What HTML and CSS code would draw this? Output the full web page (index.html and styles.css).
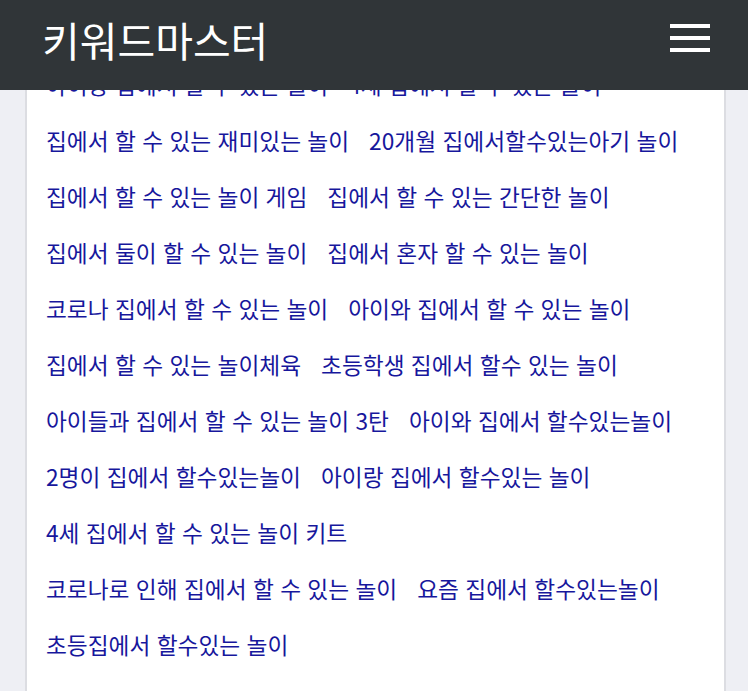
FILE: index.html
```html
<!DOCTYPE html>
<html lang="ko">
<head>
<meta charset="utf-8">
<title>키워드마스터</title>
<link rel="stylesheet" href="styles.css">
</head>
<body>
<header class="topbar">
  <div class="brand">키워드마스터</div>
  <button class="menu" aria-label="menu">
    <span class="bar"></span><span class="bar"></span><span class="bar"></span>
  </button>
</header>
<main class="panel">
  <div class="keywords">
    <a class="kw" href="#">아이랑 집에서 할 수 있는 놀이</a>
    <a class="kw" href="#">4세 집에서 할 수 있는 놀이</a>
    <a class="kw" href="#">집에서 할 수 있는 재미있는 놀이</a>
    <a class="kw" href="#">20개월 집에서할수있는아기 놀이</a>
    <a class="kw" href="#">집에서 할 수 있는 놀이 게임</a>
    <a class="kw" href="#">집에서 할 수 있는 간단한 놀이</a>
    <a class="kw" href="#">집에서 둘이 할 수 있는 놀이</a>
    <a class="kw" href="#">집에서 혼자 할 수 있는 놀이</a>
    <a class="kw" href="#">코로나 집에서 할 수 있는 놀이</a>
    <a class="kw" href="#">아이와 집에서 할 수 있는 놀이</a>
    <a class="kw" href="#">집에서 할 수 있는 놀이체육</a>
    <a class="kw" href="#">초등학생 집에서 할수 있는 놀이</a>
    <a class="kw" href="#">아이들과 집에서 할 수 있는 놀이 3탄</a>
    <a class="kw" href="#">아이와 집에서 할수있는놀이</a>
    <a class="kw" href="#">2명이 집에서 할수있는놀이</a>
    <a class="kw" href="#">아이랑 집에서 할수있는 놀이</a>
    <a class="kw" href="#">4세 집에서 할 수 있는 놀이 키트</a>
    <a class="kw" href="#">코로나로 인해 집에서 할 수 있는 놀이</a>
    <a class="kw" href="#">요즘 집에서 할수있는놀이</a>
    <a class="kw" href="#">초등집에서 할수있는 놀이</a>
  </div>
</main>
</body>
</html>
```

FILE: styles.css
```css
html, body {
  margin: 0;
  padding: 0;
}
body {
  background: #eeeff4;
  font-family: "Noto Sans CJK KR", "Noto Sans", sans-serif;
}
.topbar {
  position: fixed;
  top: 0;
  left: 0;
  right: 0;
  height: 90px;
  background: #303538;
  display: flex;
  align-items: center;
  justify-content: space-between;
  padding: 0 38px 0 42px;
  box-sizing: border-box;
  z-index: 10;
}
.brand {
  color: #ffffff;
  font-size: 41px;
  line-height: 1;
  margin-top: -12px;
}
.menu {
  background: none;
  border: 0;
  padding: 0;
  display: flex;
  flex-direction: column;
  gap: 8px;
  margin-top: -14px;
}
.bar {
  display: block;
  width: 40px;
  height: 4px;
  background: #ffffff;
}
.panel {
  margin: 0 22px 0 25px;
  background: #ffffff;
  border-left: 2px solid #dcdde2;
  border-right: 2px solid #dcdde2;
  min-height: 720px;
  padding: 57px 20px 0 19px;
}
.keywords {
  display: flex;
  flex-wrap: wrap;
  column-gap: 20px;
}
.kw {
  color: #17179c;
  text-decoration: none;
  font-size: 22.7px;
  line-height: 56px;
  white-space: nowrap;
}
```
